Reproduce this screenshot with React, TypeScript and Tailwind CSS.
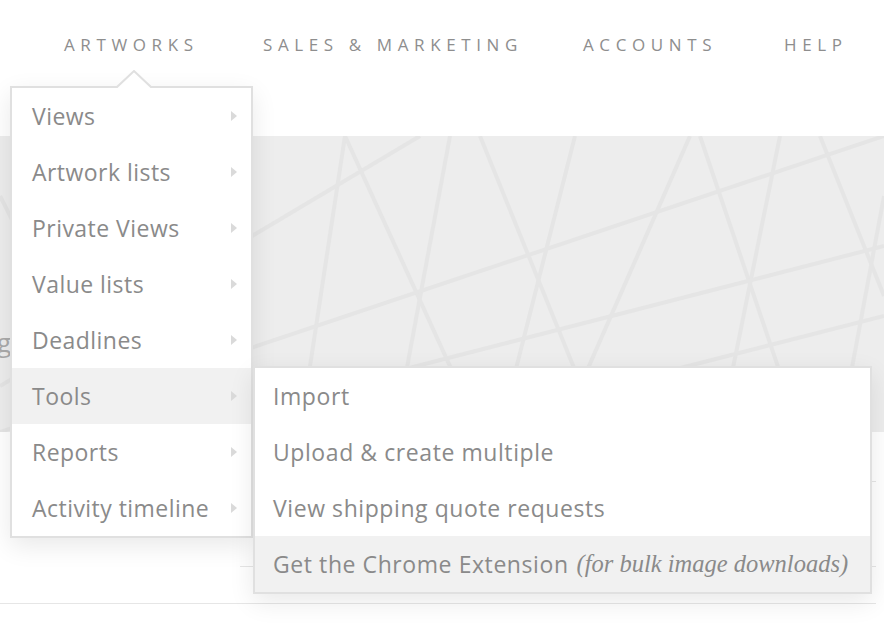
import { Fragment } from "react";

const navItems = [
  { label: "ARTWORKS", w: "w-[199px]" },
  { label: "SALES & MARKETING", w: "w-[320px]" },
  { label: "ACCOUNTS", w: "w-[201px]" },
  { label: "HELP", w: "" },
];

const mainItems = [
  "Views",
  "Artwork lists",
  "Private Views",
  "Value lists",
  "Deadlines",
  "Tools",
  "Reports",
  "Activity timeline",
];

const toolItems = ["Import", "Upload & create multiple", "View shipping quote requests"];

// faint triangle pattern behind the banner
const bandLines: [number, number, number, number][] = [
  [100, 0, 40, 296],
  [0, 60, 120, 296],
  [345, 0, 300, 296],
  [345, 0, 480, 296],
  [450, 0, 395, 296],
  [480, 0, 600, 296],
  [575, 0, 500, 296],
  [690, 0, 560, 296],
  [700, 0, 800, 296],
  [780, 0, 720, 296],
  [820, 0, 884, 160],
  [884, 60, 840, 296],
  [0, 250, 420, 0],
  [0, 296, 884, 0],
  [160, 296, 884, 110],
  [430, 296, 884, 180],
];

const Caret = () => (
  <svg width="10" height="12" viewBox="0 0 10 12" className="shrink-0">
    <path d="M2 1 L8 6 L2 11 Z" fill="#dadada" />
  </svg>
);

const App = () => {
  return (
    <div className="relative w-[884px] h-[624px] overflow-hidden bg-white font-['Open_Sans',sans-serif]">
      {/* top nav */}
      <div className="h-[136px]">
        <nav className="flex items-center h-[90px] pl-[64px]">
          {navItems.map((item) => (
            <span key={item.label} className={`${item.w} text-[17px] tracking-[0.33em] text-[#8e8e8e] whitespace-nowrap`}>
              {item.label}
            </span>
          ))}
        </nav>
      </div>

      {/* banner */}
      <div className="relative h-[296px] bg-[#ededed] overflow-hidden">
        <svg className="absolute inset-0" width="884" height="296">
          {bandLines.map(([x1, y1, x2, y2], i) => (
            <line key={i} x1={x1} y1={y1} x2={x2} y2={y2} stroke="#e5e5e5" strokeWidth="4" />
          ))}
        </svg>
        <p className="relative pt-[187px] -ml-[3px] text-[26px] text-[#aaaaaa]">g</p>
      </div>

      {/* rows below the banner */}
      <div className="w-[876px]">
        <div className="ml-[240px] h-[50px] border-b border-[#e6e6e6]" />
        <div className="ml-[240px] h-[85px] border-b border-[#e6e6e6]" />
        <div className="h-[37px] border-b border-[#e6e6e6]" />
      </div>

      {/* artworks dropdown */}
      <div className="absolute left-[10px] top-[86px] w-[243px] bg-white border-2 border-[#e0e0e0] shadow-[0_8px_24px_rgba(0,0,0,0.09)]">
        <svg className="absolute left-[104px] top-[-18px]" width="36" height="19" viewBox="0 0 36 19">
          <path d="M0 18 L18 1 L36 18" fill="white" stroke="#e0e0e0" strokeWidth="2" />
          <rect x="0" y="18" width="36" height="2" fill="white" />
        </svg>
        {mainItems.map((item) => (
          <div
            key={item}
            className={`flex items-center justify-between h-[56px] pl-[20px] pr-[12px] text-[23px] tracking-[0.02em] text-[#8a8a8a] ${
              item === "Tools" ? "bg-[#f1f1f1]" : ""
            }`}
          >
            <span className="whitespace-nowrap">{item}</span>
            <Caret />
          </div>
        ))}
      </div>

      {/* tools submenu */}
      <div className="absolute left-[253px] top-[366px] w-[619px] bg-white border-2 border-[#e0e0e0] shadow-[0_8px_24px_rgba(0,0,0,0.09)]">
        {toolItems.map((item) => (
          <Fragment key={item}>
            <div className="flex items-center h-[56px] pl-[18px] text-[23px] tracking-[0.025em] text-[#8a8a8a]">{item}</div>
          </Fragment>
        ))}
        <div className="flex items-center h-[56px] pl-[18px] bg-[#f1f1f1] text-[23px] tracking-[0.025em] text-[#8a8a8a] whitespace-nowrap">
          Get the Chrome Extension
          <span className="ml-[8px] font-['Liberation_Serif',serif] italic text-[24.5px] tracking-normal text-[#8a8a8a]">
            (for bulk image downloads)
          </span>
        </div>
      </div>
    </div>
  );
};

export default App;
